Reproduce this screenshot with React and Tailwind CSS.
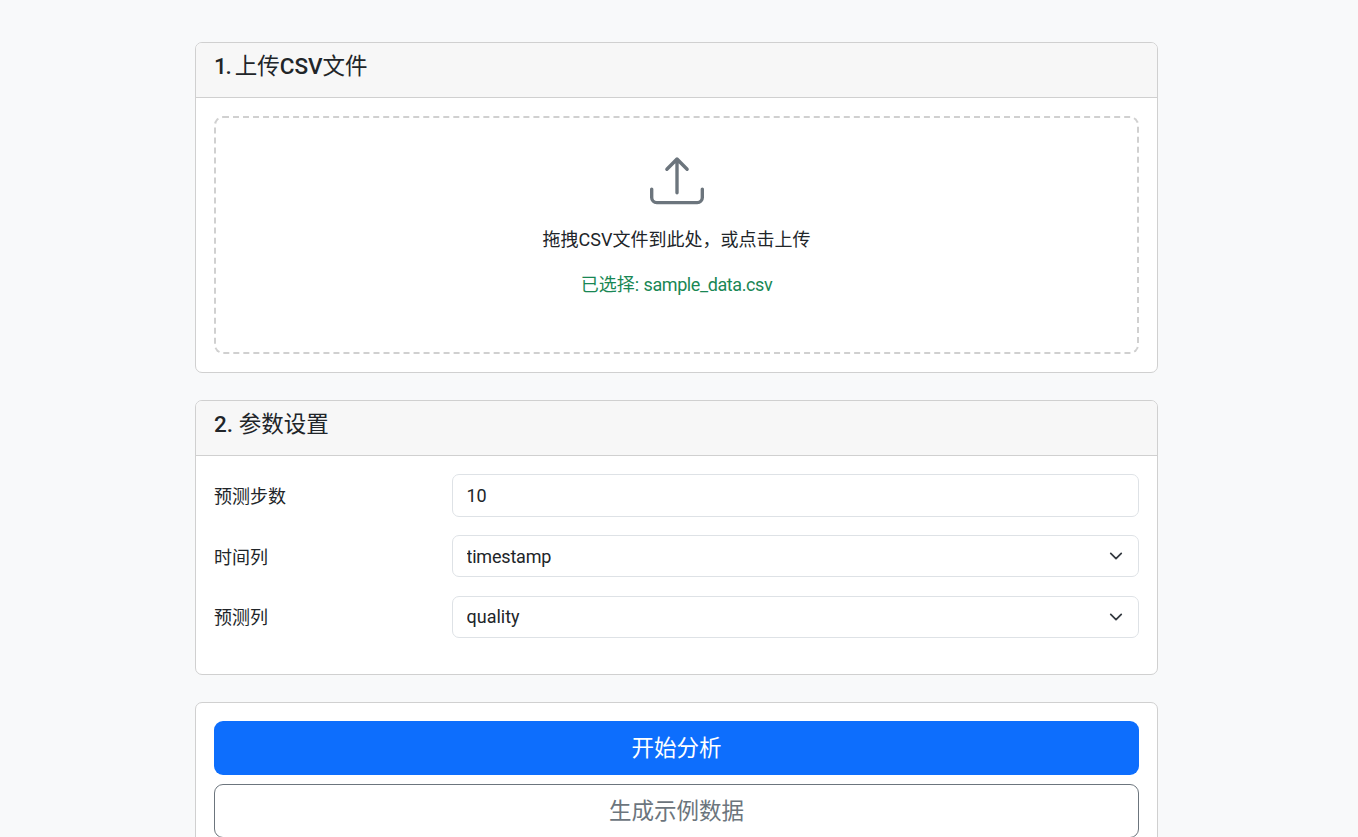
const font = "font-['Roboto','Noto_Sans_CJK_SC',sans-serif]";

const UploadIcon = () => (
  <svg xmlns="http://www.w3.org/2000/svg" viewBox="0 0 16 16" fill="currentColor" className="w-[54px] h-[54px] text-[#6c757d]">
    <path d="M.5 9.9a.5.5 0 0 1 .5.5v2.5a1 1 0 0 0 1 1h12a1 1 0 0 0 1-1v-2.5a.5.5 0 0 1 1 0v2.5a2 2 0 0 1-2 2H2a2 2 0 0 1-2-2v-2.5a.5.5 0 0 1 .5-.5" />
    <path d="M7.646 1.146a.5.5 0 0 1 .708 0l3 3a.5.5 0 0 1-.708.708L8.5 2.707V11.5a.5.5 0 0 1-1 0V2.707L5.354 4.854a.5.5 0 1 1-.708-.708z" />
  </svg>
);

const Chevron = () => (
  <svg viewBox="0 0 16 16" fill="none" stroke="#343a40" strokeWidth="2" strokeLinecap="round" strokeLinejoin="round" className="absolute right-[16px] top-[14px] w-[14px] h-[14px] pointer-events-none">
    <path d="m2 5 6 6 6-6" />
  </svg>
);

const Card = ({ title, children }) => (
  <section className="bg-white border border-[#d0d0d0] rounded-[7px] overflow-hidden mb-[27px]">
    {title && (
      <div className="bg-[#f7f7f7] border-b border-[#d0d0d0] px-[18px] pt-[10px] pb-[17px]">
        <h5 className="text-[22.5px] leading-[27px] font-medium">{title}</h5>
      </div>
    )}
    {children}
  </section>
);

const Row = ({ label, children }) => (
  <div className="flex items-center mb-[18.1px]">
    <label className="w-[238px] shrink-0 pt-[2px]">{label}</label>
    <div className="relative flex-1">{children}</div>
  </div>
);

const fieldClass = "block w-full h-[42.5px] bg-white border border-[#dee2e6] rounded-[7px] px-[13.5px] text-[18px] text-[#212529] appearance-none outline-none";

export default function App() {
  return (
    <div className={`min-h-screen bg-[#f8f9fa] text-[18px] leading-[27px] text-[#212529] ${font}`}>
      <div className="w-[963px] ml-[195px] pt-[42px]">
        <Card title={<><span className="tracking-[-1.3px]">1. </span><span className="font-normal">上传</span>CSV<span className="font-normal">文件</span></>}>
          <div className="p-[18px]">
            <div className="flex flex-col items-center border-2 border-dashed border-[#d0d0d0] rounded-[9px] pt-[36px] pb-[36px]">
              <UploadIcon />
              <p className="mt-[18px]">拖拽CSV文件到此处，或点击上传</p>
              <p className="mt-[18px] mb-[18px] text-[#198754]">已选择: <span className="tracking-[-0.4px]">sample_data.csv</span></p>
            </div>
          </div>
        </Card>

        <Card title={<>2. <span className="font-normal">参数设置</span></>}>
          <div className="px-[18px] pt-[18.35px] pb-[17.85px]">
            <Row label="预测步数">
              <input type="number" defaultValue="10" className={fieldClass} />
            </Row>
            <Row label="时间列">
              <select defaultValue="timestamp" className={`${fieldClass} tracking-[-0.2px]`}>
                <option>timestamp</option>
              </select>
              <Chevron />
            </Row>
            <Row label="预测列">
              <select defaultValue="quality" className={fieldClass}>
                <option>quality</option>
              </select>
              <Chevron />
            </Row>
          </div>
        </Card>

        <Card>
          <div className="flex flex-col gap-[9px] p-[18px]">
            <button className="w-full h-[54px] pt-[2px] bg-[#0d6efd] text-white text-[22.5px] rounded-[9px]">开始分析</button>
            <button className="w-full h-[54px] pt-[2px] bg-white border border-[#6c757d] text-[#6c757d] text-[22.5px] rounded-[9px]">生成示例数据</button>
          </div>
        </Card>
      </div>
    </div>
  );
}
